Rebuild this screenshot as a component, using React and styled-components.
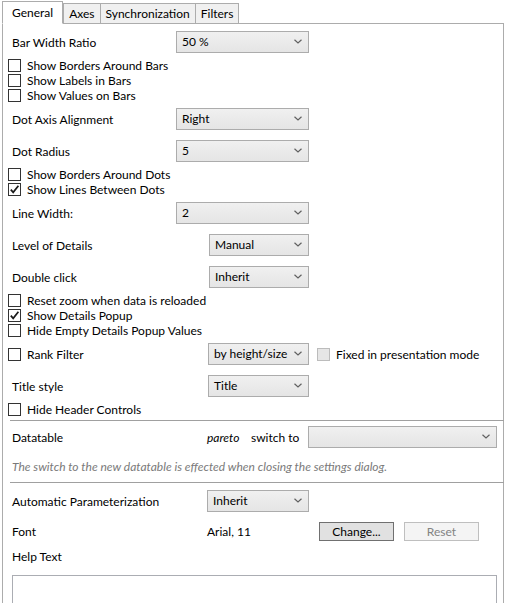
import React from 'react'
import styled, { createGlobalStyle } from 'styled-components'

const GlobalStyle = createGlobalStyle`
  html, body {
    margin: 0;
    padding: 0;
    background: #ffffff;
  }
  body {
    font-family: Lato, "Noto Sans", sans-serif;
    font-size: 12px;
    color: #000;
  }
`

const Chevron = () => (
    <svg width="8" height="5" viewBox="0 0 8 5">
        <path d="M0.5 0.8 L4 4 L7.5 0.8" fill="none" stroke="#606060" strokeWidth="1.2" />
    </svg>
)

const Check = () => (
    <svg width="11" height="11" viewBox="0 0 11 11">
        <path d="M1.8 5.6 L4.2 8.4 L9.4 1.8" fill="none" stroke="#1a1a1a" strokeWidth="1.7" />
    </svg>
)

const Combo = ({ value, width }) => (
    <ComboBox $width={width}>
        <span>{value}</span>
        <Chevron />
    </ComboBox>
)

const CheckRow = ({ label, checked }) => (
    <CheckLine>
        <Box>{checked && <Check />}</Box>
        <span>{label}</span>
    </CheckLine>
)

const FieldRow = ({ label, value, col = 168, width = 133, children }) => (
    <Field>
        <Label $col={col}>{label}</Label>
        <Combo value={value} width={width} />
        {children}
    </Field>
)

const App = () => {
    return (
        <Window>
            <GlobalStyle />
            <TabStrip>
                <Tab $active>General</Tab>
                <Tab>Axes</Tab>
                <Tab>Synchronization</Tab>
                <Tab>Filters</Tab>
            </TabStrip>
            <Panel>
                <FieldRow label="Bar Width Ratio" value="50 %" />
                <CheckRow label="Show Borders Around Bars" />
                <CheckRow label="Show Labels in Bars" />
                <CheckRow label="Show Values on Bars" />
                <FieldRow label="Dot Axis Alignment" value="Right" />
                <FieldRow label="Dot Radius" value="5" />
                <CheckRow label="Show Borders Around Dots" />
                <CheckRow label="Show Lines Between Dots" checked />
                <FieldRow label="Line Width:" value="2" />
                <FieldRow label="Level of Details" value="Manual" col={201} width={100} />
                <FieldRow label="Double click" value="Inherit" col={201} width={100} />
                <CheckRow label="Reset zoom when data is reloaded" />
                <CheckRow label="Show Details Popup" checked />
                <CheckRow label="Hide Empty Details Popup Values" />
                <Field>
                    <CheckLine>
                        <Box>{null}</Box>
                        <RankLabel>Rank Filter</RankLabel>
                    </CheckLine>
                    <Combo value="by height/size" width={101} />
                    <CheckLine $inline>
                        <Box $disabled />
                        <span>Fixed in presentation mode</span>
                    </CheckLine>
                </Field>
                <FieldRow label="Title style" value="Title" col={200} width={101} />
                <CheckRow label="Hide Header Controls" />

                <Separator />

                <DataRow>
                    <Label $col={199}>Datatable</Label>
                    <Pareto>pareto</Pareto>
                    <SwitchTo>switch to</SwitchTo>
                    <Combo value="" width={189} />
                </DataRow>
                <Note>The switch to the new datatable is effected when closing the settings dialog.</Note>

                <Separator />

                <Field $top={2}>
                    <Label $col={199}>Automatic Parameterization</Label>
                    <Combo value="Inherit" width={102} />
                </Field>
                <FontRow>
                    <Label $col={199}>Font</Label>
                    <FontValue>Arial, 11</FontValue>
                    <Button>Change...</Button>
                    <Button disabled>Reset</Button>
                </FontRow>
                <HelpLabel>Help Text</HelpLabel>
                <HelpArea />
            </Panel>
        </Window>
    )
}

const Window = styled.div`
    width: 507px;
    height: 603px;
    overflow: hidden;
    background: #fff;
    padding: 1px 0 0 2px;
    box-sizing: border-box;
`

const TabStrip = styled.div`
    display: flex;
    align-items: flex-end;
    height: 23px;
    position: relative;
    z-index: 1;
`

const Tab = styled.div`
    height: ${p => (p.$active ? '23px' : '21px')};
    box-sizing: border-box;
    padding: ${p => (p.$active ? '3px 9px 0 9px' : '2px 5px 0 5px')};
    margin-right: ${p => (p.$active ? '0' : '-1px')};
    border: 1px solid #acacac;
    border-bottom: ${p => (p.$active ? '1px solid #fff' : '1px solid #acacac')};
    background: ${p => (p.$active ? '#fff' : '#f0f0f0')};
    white-space: nowrap;
    line-height: 16px;
`

const Panel = styled.div`
    width: 502px;
    height: 600px;
    box-sizing: border-box;
    margin-top: -1px;
    border: 1px solid #acacac;
    background: #fff;
    padding: 2px 0 0 5px;
    display: flex;
    flex-direction: column;
`

const Field = styled.div`
    display: flex;
    align-items: center;
    height: 32px;
    margin-top: ${p => p.$top || 0}px;
    flex-shrink: 0;
`

const Label = styled.div`
    width: ${p => p.$col}px;
    padding-left: 4px;
    box-sizing: border-box;
    white-space: nowrap;
    flex-shrink: 0;
`

const ComboBox = styled.div`
    width: ${p => p.$width}px;
    height: 22px;
    box-sizing: border-box;
    border: 1px solid #acacac;
    background: linear-gradient(#f0f0f0, #e5e5e5);
    display: flex;
    align-items: center;
    justify-content: space-between;
    padding: 0 6px 1px 5px;
    flex-shrink: 0;
`

const CheckLine = styled.div`
    display: flex;
    align-items: center;
    height: 15px;
    line-height: 15px;
    gap: 6px;
    white-space: nowrap;
    flex-shrink: 0;
    margin-left: ${p => (p.$inline ? '8px' : '0')};
`

const Box = styled.div`
    width: 13px;
    height: 13px;
    box-sizing: border-box;
    border: 1px solid ${p => (p.$disabled ? '#bcbcbc' : '#333')};
    background: ${p => (p.$disabled ? '#e6e6e6' : '#fff')};
    display: flex;
    align-items: center;
    justify-content: center;
`

const RankLabel = styled.span`
    width: 181px;
`

const Separator = styled.div`
    height: 1px;
    background: #a0a0a0;
    margin: 3px 0 0 2px;
    width: 494px;
    flex-shrink: 0;
`

const DataRow = styled.div`
    display: flex;
    align-items: center;
    height: 24px;
    margin-top: 4px;
    flex-shrink: 0;
`

const Pareto = styled.span`
    font-style: italic;
    width: 44px;
`

const SwitchTo = styled.span`
    width: 57px;
`

const Note = styled.div`
    font-style: italic;
    color: #7a7a7a;
    padding-left: 4px;
    height: 21px;
    line-height: 21px;
    margin: 7px 0 2px;
    white-space: nowrap;
`

const FontRow = styled.div`
    display: flex;
    align-items: center;
    height: 20px;
    margin-top: 5px;
`

const FontValue = styled.span`
    width: 112px;
`

const Button = styled.button`
    width: 75px;
    height: 19px;
    margin-right: 10px;
    padding: 0;
    font: inherit;
    line-height: 15px;
    border: 1px solid ${p => (p.disabled ? '#bfbfbf' : '#707070')};
    background: ${p => (p.disabled ? '#f4f4f4' : '#e1e1e1')};
    color: ${p => (p.disabled ? '#838383' : '#000')};
`

const HelpLabel = styled.div`
    padding-left: 4px;
    margin-top: 8px;
    height: 16px;
    line-height: 16px;
`

const HelpArea = styled.div`
    margin: 10px 0 0 4px;
    width: 485px;
    height: 60px;
    box-sizing: border-box;
    border: 1px solid #abadb3;
    flex-shrink: 0;
`

export default App
